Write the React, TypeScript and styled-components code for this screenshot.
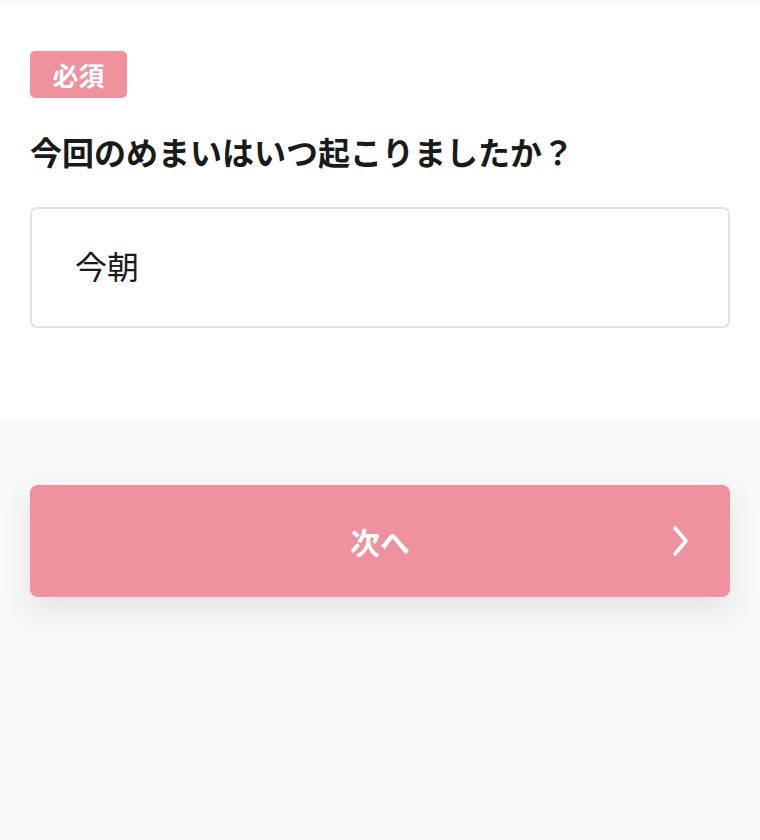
import React from "react";
import styled, { createGlobalStyle } from "styled-components";

const GlobalStyle = createGlobalStyle`
  html, body {
    margin: 0;
    padding: 0;
    background: #f8f8f8;
    font-family: "Noto Sans CJK JP", "Noto Sans", sans-serif;
  }
  * { box-sizing: border-box; }
`;

const Page = styled.div`
  min-height: 840px;
  background: #f8f8f8;
  padding-top: 3px;
`;

const QuestionSection = styled.section`
  background: #ffffff;
  padding: 48px 30px 92px;
  display: flex;
  flex-direction: column;
  align-items: flex-start;
`;

const Badge = styled.span`
  display: inline-flex;
  align-items: center;
  justify-content: center;
  width: 97px;
  height: 47px;
  border-radius: 5px;
  background: #f0919e;
  color: #ffffff;
  font-size: 26px;
  font-weight: 700;
  line-height: 1;
`;

const Title = styled.h1`
  margin: 31px 0 0;
  font-size: 32px;
  font-weight: 700;
  line-height: 1.4;
  color: #1a1a1a;
`;

const AnswerBox = styled.div`
  margin-top: 33px;
  width: 100%;
  height: 121px;
  border: 2px solid #e2e2e2;
  border-radius: 7px;
  display: flex;
  align-items: center;
  padding: 0 0 4px 43px;
  font-size: 32px;
  font-weight: 400;
  color: #1a1a1a;
`;

const Footer = styled.div`
  padding: 65px 30px 0;
`;

const NextButton = styled.button`
  position: relative;
  width: 100%;
  height: 112px;
  border: none;
  border-radius: 8px;
  background: #ef919e;
  color: #ffffff;
  font-family: inherit;
  font-size: 30px;
  font-weight: 700;
  display: flex;
  align-items: center;
  justify-content: center;
  box-shadow: 0 12px 30px rgba(0, 0, 0, 0.09);
  cursor: pointer;
`;

const Chevron = styled.svg`
  position: absolute;
  right: 38px;
  top: 50%;
  transform: translateY(-50%);
`;

export default function App() {
  return (
    <>
      <GlobalStyle />
      <Page>
        <QuestionSection>
          <Badge>必須</Badge>
          <Title>今回のめまいはいつ起こりましたか？</Title>
          <AnswerBox>今朝</AnswerBox>
        </QuestionSection>
        <Footer>
          <NextButton type="button">
            次へ
            <Chevron width="22" height="32" viewBox="0 0 22 32" fill="none">
              <path d="M5 3 L16 16 L5 29" stroke="#ffffff" strokeWidth="3.6" strokeLinecap="round" strokeLinejoin="round" />
            </Chevron>
          </NextButton>
        </Footer>
      </Page>
    </>
  );
}
